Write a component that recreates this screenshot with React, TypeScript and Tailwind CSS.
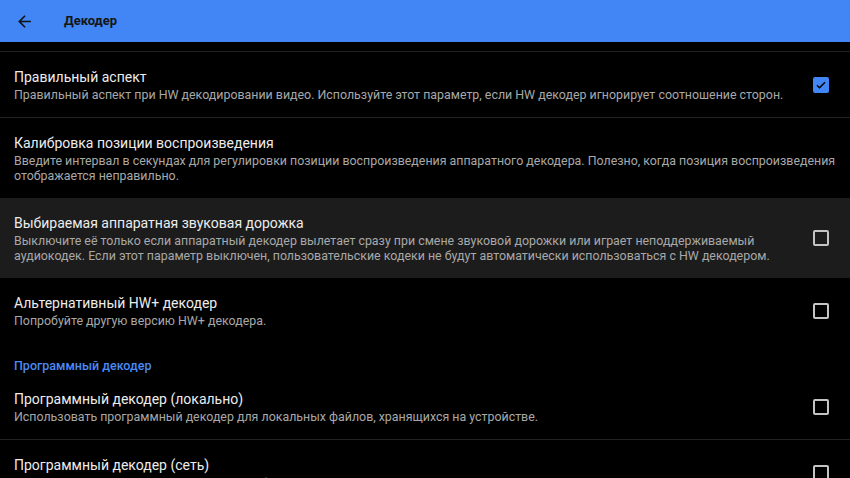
import React from 'react';

interface PrefItem {
  kind: 'item';
  title: string;
  summary: string;
  checkbox?: 'on' | 'off';
  highlighted?: boolean;
  divider?: boolean;
}

interface PrefCategory {
  kind: 'category';
  title: string;
}

type Pref = PrefItem | PrefCategory;

const prefs: Pref[] = [
  {
    kind: 'item',
    title: 'Правильный аспект',
    summary:
      'Правильный аспект при HW декодировании видео. Используйте этот параметр, если HW декодер игнорирует соотношение сторон.',
    checkbox: 'on',
    divider: true,
  },
  {
    kind: 'item',
    title: 'Калибровка позиции воспроизведения',
    summary:
      'Введите интервал в секундах для регулировки позиции воспроизведения аппаратного декодера. Полезно, когда позиция воспроизведения отображается неправильно.',
  },
  {
    kind: 'item',
    title: 'Выбираемая аппаратная звуковая дорожка',
    summary:
      'Выключите её только если аппаратный декодер вылетает сразу при смене звуковой дорожки или играет неподдерживаемый аудиокодек. Если этот параметр выключен, пользовательские кодеки не будут автоматически использоваться с HW декодером.',
    checkbox: 'off',
    highlighted: true,
  },
  {
    kind: 'item',
    title: 'Альтернативный HW+ декодер',
    summary: 'Попробуйте другую версию HW+ декодера.',
    checkbox: 'off',
  },
  { kind: 'category', title: 'Программный декодер' },
  {
    kind: 'item',
    title: 'Программный декодер (локально)',
    summary: 'Использовать программный декодер для локальных файлов, хранящихся на устройстве.',
    checkbox: 'off',
    divider: true,
  },
  {
    kind: 'item',
    title: 'Программный декодер (сеть)',
    summary:
      'Использовать программный декодер для файлов, полученных по сетевым протоколам, таким как HTTP, FTP, RTSP, MMS и т.д.',
    checkbox: 'off',
  },
];

const Checkbox: React.FC<{ checked: boolean }> = ({ checked }) =>
  checked ? (
    <div className="w-[16px] h-[16px] rounded-[2px] bg-[#4285f4] flex items-center justify-center">
      <svg width="12" height="12" viewBox="0 0 24 24">
        <path d="M4 12.5l5 5L20 6.5" fill="none" stroke="#000" strokeWidth="3" />
      </svg>
    </div>
  ) : (
    <div className="w-[16px] h-[16px] rounded-[2px] border-2 border-[#c4c4c4]" />
  );

const App: React.FC = () => {
  return (
    <div
      className="w-[850px] h-[478px] overflow-hidden bg-black"
      style={{ fontFamily: 'Roboto, "Liberation Sans", sans-serif' }}
    >
      <div className="h-[42px] bg-[#4285f4] flex items-center">
        <div className="w-[64px] flex items-center pl-[15px]">
          <svg width="19" height="19" viewBox="0 0 24 24">
            <path d="M20 11H7.83l5.59-5.59L12 4l-8 8 8 8 1.41-1.41L7.83 13H20v-2z" fill="#111" />
          </svg>
        </div>
        <span className="text-[13px] font-bold text-[#151515]">Декодер</span>
      </div>

      <div className="h-[10px] border-b border-[#222]" />

      {prefs.map((p, i) => {
        if (p.kind === 'category') {
          return (
            <div key={i} className="h-[31px] pt-[16px] pl-[14px] text-[12.5px] leading-[14px] font-medium text-[#4a8af4]">
              {p.title}
            </div>
          );
        }
        return (
          <div
            key={i}
            className={`flex items-center pl-[14px] py-[15px] ${p.highlighted ? 'bg-[#1c1c1c]' : ''} ${
              p.divider ? 'border-b border-[#222]' : ''
            }`}
          >
            <div className={`flex-1 min-w-0 ${p.checkbox ? '' : 'pr-[12px]'}`}>
              <div className="text-[14px] leading-[20px] text-[#ececec]">{p.title}</div>
              <div className="text-[12.4px] leading-[15px] text-[#a8a8a8]">{p.summary}</div>
            </div>
            {p.checkbox && (
              <div className="w-[58px] flex justify-center shrink-0">
                <Checkbox checked={p.checkbox === 'on'} />
              </div>
            )}
          </div>
        );
      })}
    </div>
  );
};

export default App;
